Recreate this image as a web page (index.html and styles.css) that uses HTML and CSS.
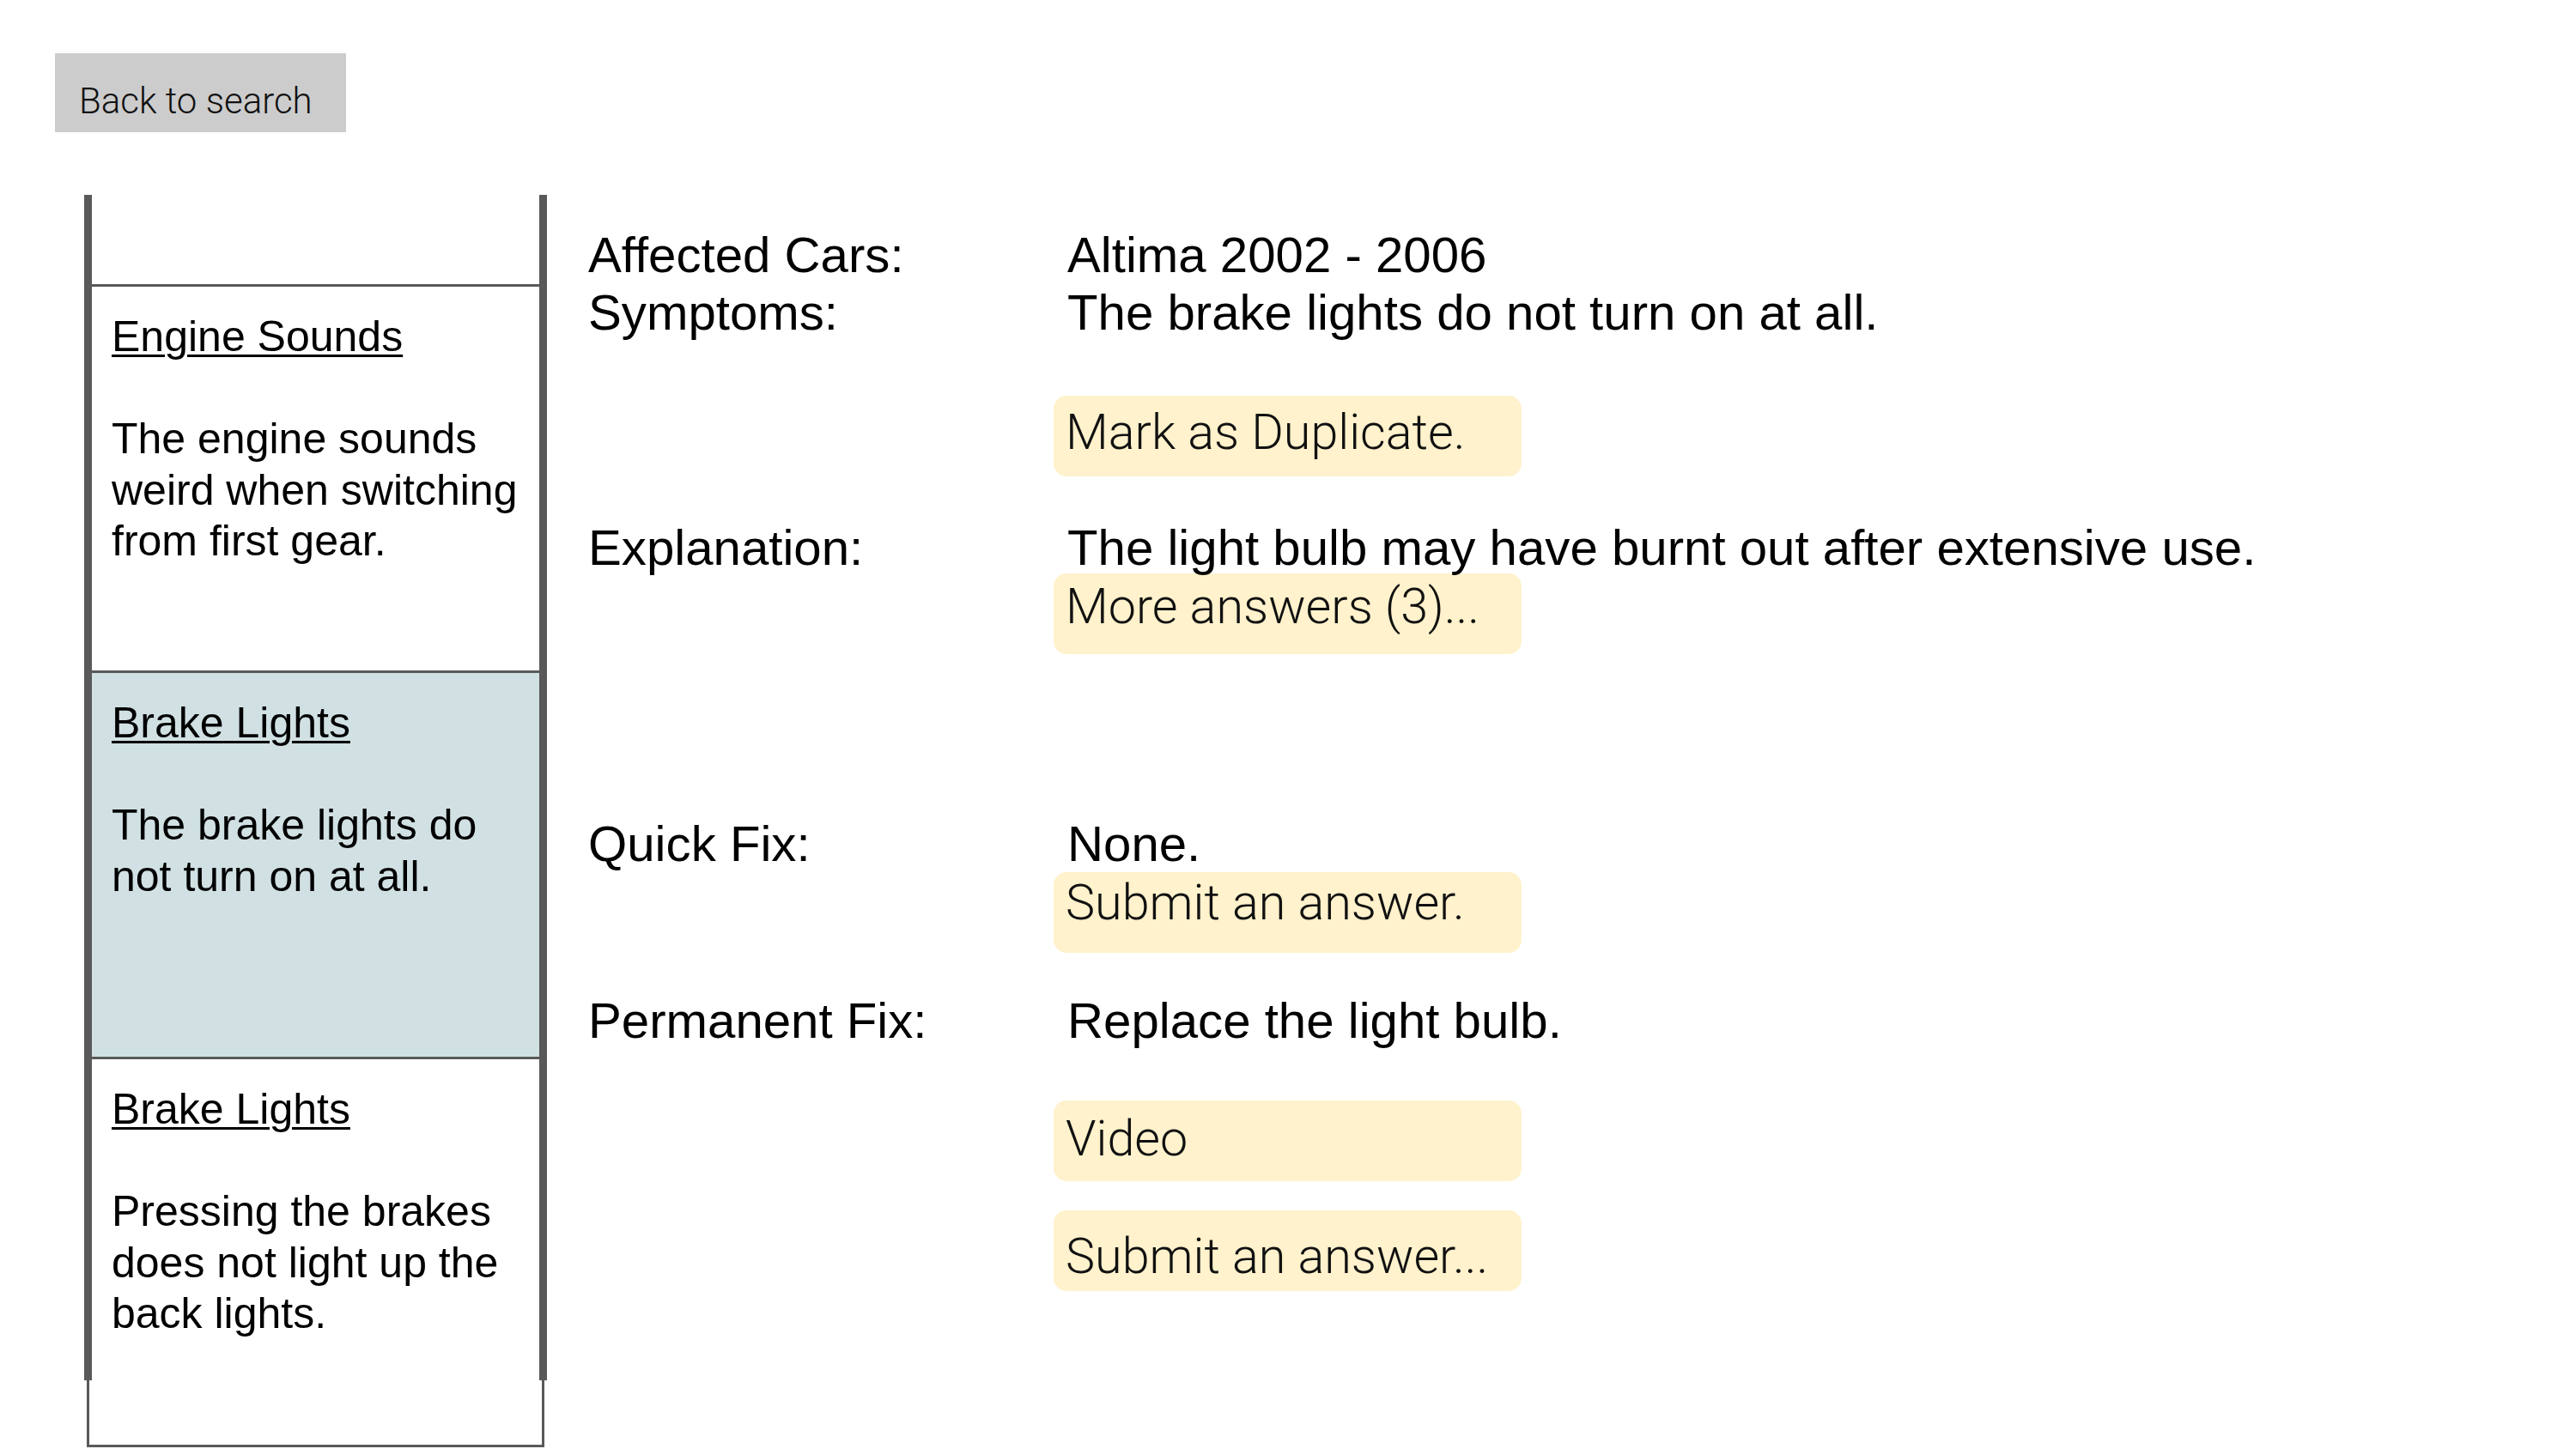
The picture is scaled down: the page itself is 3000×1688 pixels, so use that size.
FILE: index.html
```html
<!DOCTYPE html>
<html lang="en">
<head>
<meta charset="utf-8">
<title>Issue details</title>
<link rel="stylesheet" href="styles.css">
</head>
<body>
<div class="page">
  <div class="back">Back to search</div>
  <div class="main">
    <aside class="sidebar">
      <div class="spacer"></div>
      <div class="item">
        <a class="title">Engine Sounds</a>
        <p class="desc">The engine sounds weird when switching from first gear.</p>
      </div>
      <div class="item active">
        <a class="title">Brake Lights</a>
        <p class="desc">The brake lights do not turn on at all.</p>
      </div>
      <div class="item last">
        <a class="title">Brake Lights</a>
        <p class="desc">Pressing the brakes does not light up the back lights.</p>
      </div>
    </aside>
    <section class="detail">
      <div class="row">
        <div class="label">Affected Cars:</div>
        <div class="value"><div class="text">Altima 2002 - 2006</div></div>
      </div>
      <div class="row">
        <div class="label">Symptoms:</div>
        <div class="value">
          <div class="text">The brake lights do not turn on at all.</div>
          <div class="chip chip-dup">Mark as Duplicate.</div>
        </div>
      </div>
      <div class="row row-expl">
        <div class="label">Explanation:</div>
        <div class="value">
          <div class="text">The light bulb may have burnt out after extensive use.</div>
          <div class="chip chip-more">More answers (3)...</div>
        </div>
      </div>
      <div class="row row-quick">
        <div class="label">Quick Fix:</div>
        <div class="value">
          <div class="text">None.</div>
          <div class="chip chip-submit">Submit an answer.</div>
        </div>
      </div>
      <div class="row row-perm">
        <div class="label">Permanent Fix:</div>
        <div class="value">
          <div class="text">Replace the light bulb.</div>
          <div class="chip chip-video">Video</div>
          <div class="chip chip-submit2">Submit an answer...</div>
        </div>
      </div>
    </section>
  </div>
</div>
</body>
</html>
```
FILE: styles.css
```css
html, body {
  margin: 0;
  background: #ffffff;
}

body {
  font-family: "Liberation Sans", Arial, sans-serif;
  color: #000000;
}

.page {
  padding: 62px 0 0 64px;
}

.back {
  width: 339px;
  height: 92px;
  box-sizing: border-box;
  background: #cccccc;
  padding: 28px 0 0 28px;
  font-family: Roboto, "Liberation Sans", sans-serif;
  font-weight: 300;
  font-size: 42px;
  line-height: 56px;
  color: #111111;
}

.main {
  display: flex;
  align-items: flex-start;
  margin-top: 73px;
  margin-left: 37px;
}

/* sidebar list */
.sidebar {
  position: relative;
  flex: none;
  width: 533px;
}

.sidebar::before,
.sidebar::after {
  content: "";
  position: absolute;
  top: 0;
  width: 9px;
  height: 1381px;
  background: #595959;
}

.sidebar::before {
  left: -3px;
}

.sidebar::after {
  left: 527px;
}

.spacer {
  height: 104px;
}

.item {
  height: 450px;
  box-sizing: border-box;
  border: 3px solid #595959;
  border-bottom: none;
  padding: 29px 20px 0 26px;
  font-size: 50px;
  line-height: 59.5px;
}

.item.active {
  background: #d0e0e3;
}

.item.last {
  height: 455px;
  border-bottom: 3px solid #595959;
}

.title {
  display: block;
  color: #000000;
  text-decoration: underline;
  text-decoration-thickness: 3px;
  text-underline-offset: 4px;
  margin-bottom: 59.5px;
}

.desc {
  margin: 0;
}

/* details */
.detail {
  flex: 1;
  margin-left: 51px;
  padding-top: 36px;
  font-size: 58.2px;
  line-height: 67px;
}

.row {
  display: grid;
  grid-template-columns: 558px 1fr;
}

.row-expl {
  margin-top: 49px;
}

.row-quick {
  margin-top: 187px;
}

.row-perm {
  margin-top: 45px;
}

.label,
.text {
  white-space: nowrap;
}

.chip {
  width: 545px;
  height: 94px;
  box-sizing: border-box;
  margin-left: -16px;
  padding-left: 14px;
  border-radius: 15px;
  background: #fff2cc;
  font-family: Roboto, "Liberation Sans", sans-serif;
  font-weight: 300;
  font-size: 57.5px;
  line-height: 67px;
  color: #111111;
  white-space: nowrap;
}

.chip-dup {
  margin-top: 64px;
  padding-top: 9px;
}

.chip-more {
  margin-top: -3px;
  padding-top: 5px;
}

.chip-submit {
  margin-top: 0;
  padding-top: 2px;
}

.chip-video {
  margin-top: 60px;
  padding-top: 11px;
}

.chip-submit2 {
  margin-top: 34px;
  padding-top: 20px;
}
```
